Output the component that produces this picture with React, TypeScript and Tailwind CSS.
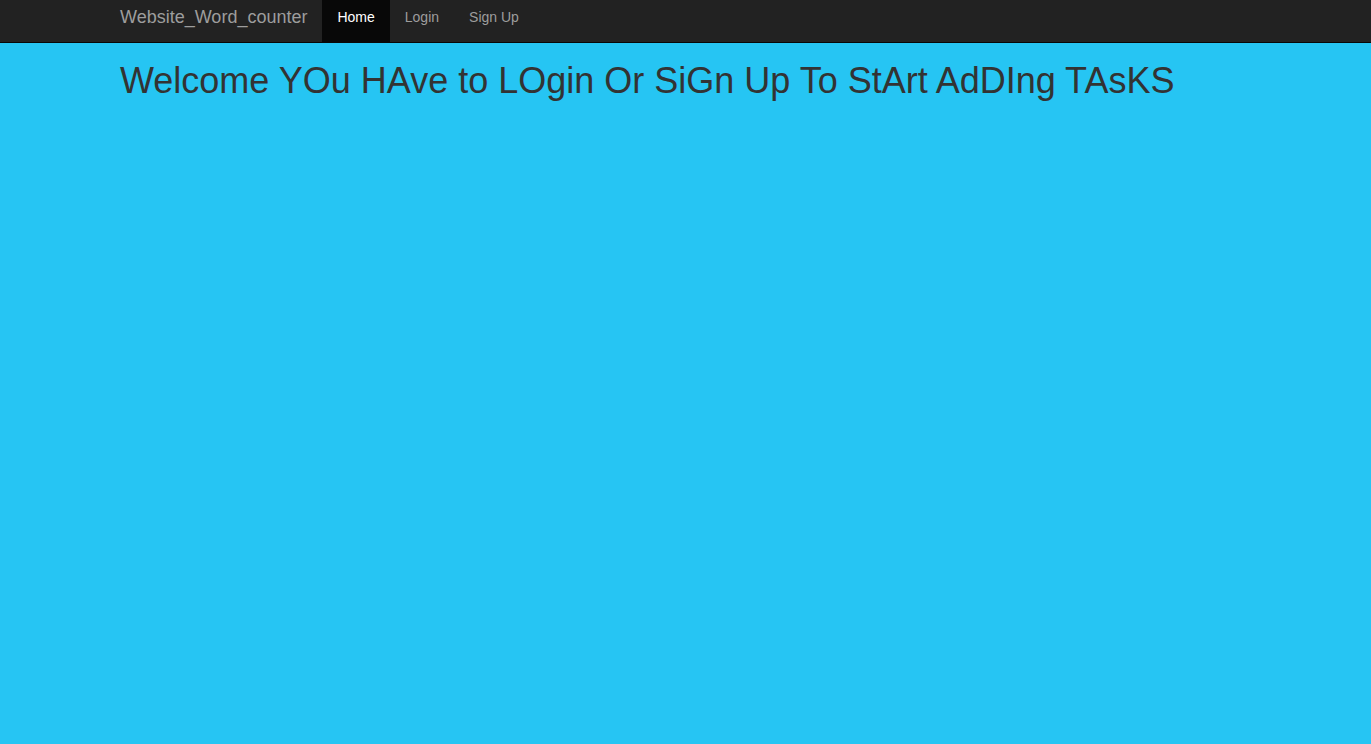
const links = [
    { label: "Home", active: true },
    { label: "Login", active: false },
    { label: "Sign Up", active: false },
];

export default function App() {
    return (
        <div className="min-h-[744px] bg-[#26c5f3] font-['Liberation_Sans',Arial,sans-serif] text-[#333]">
            <nav className="h-[43px] border-b border-[#080808] bg-[#222]">
                <div className="mx-auto flex h-[42px] max-w-[1131px]">
                    <a href="#" className="pr-[15px] pt-[7px] text-[18px] leading-[20px] text-[#9d9d9d]">
                        Website_Word_counter
                    </a>
                    <ul className="flex">
                        {links.map((link) => (
                            <li key={link.label}>
                                <a
                                    href="#"
                                    className={
                                        link.active
                                            ? "block h-[42px] bg-[#080808] px-[15px] pt-[7px] text-[14px] leading-[20px] text-white"
                                            : "block h-[42px] px-[15px] pt-[7px] text-[14px] leading-[20px] text-[#9d9d9d]"
                                    }
                                >
                                    {link.label}
                                </a>
                            </li>
                        ))}
                    </ul>
                </div>
            </nav>
            <div className="mx-auto max-w-[1131px]">
                <h1 className="mt-[18px] text-[36px] leading-[1.1] font-normal">
                    Welcome YOu HAve to LOgin Or SiGn Up To StArt AdDIng TAsKS
                </h1>
            </div>
        </div>
    );
}
